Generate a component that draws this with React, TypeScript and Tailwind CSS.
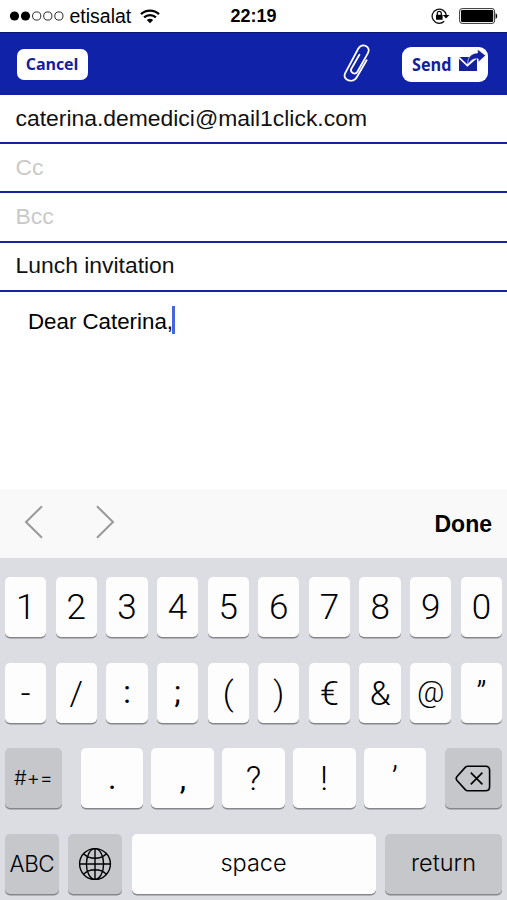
import type { ReactNode } from "react";

const SANS = "font-['Liberation_Sans',Arial,sans-serif]";

function StatusBar() {
  return (
    <div className="flex h-8 items-center bg-white text-black">
      <div className="flex flex-1 items-center pl-[9px]">
        <svg width="56" height="12" viewBox="0 0 56 12" className="shrink-0">
          <circle cx="5.5" cy="6" r="4.6" fill="#000" />
          <circle cx="16.5" cy="6" r="4.6" fill="#000" />
          <circle cx="27.7" cy="6" r="4.1" fill="none" stroke="#111" strokeWidth="0.9" />
          <circle cx="38.8" cy="6" r="4.1" fill="none" stroke="#111" strokeWidth="0.9" />
          <circle cx="49.9" cy="6" r="4.1" fill="none" stroke="#111" strokeWidth="0.9" />
        </svg>
        <span className="ml-[4.5px] text-[19.5px] leading-8">etisalat</span>
        <svg width="20" height="15" viewBox="0 0 20 15" className="ml-[9px]">
          <path d="M1 5.2C6 .4 14 .4 19 5.2" fill="none" stroke="#000" strokeWidth="2.3" />
          <path d="M4.1 8.4C7.3 5.3 12.7 5.3 15.9 8.4" fill="none" stroke="#000" strokeWidth="2.2" />
          <path d="M6.8 11.1C8.6 9.4 11.4 9.4 13.2 11.1L10 14.3Z" fill="#000" />
        </svg>
      </div>
      <span className="text-[18px] font-bold leading-8">22:19</span>
      <div className="flex flex-1 items-center justify-end pr-[9px]">
        <svg width="19" height="18" viewBox="0 0 19 18">
          <path d="M13.2 14.3A7.1 7.1 0 1 1 15.3 8.2" fill="none" stroke="#111" strokeWidth="1.3" />
          <path d="M11.8 7.9H18.4L15.1 11.5Z" fill="#000" />
          <rect x="5" y="7.8" width="6.6" height="5" rx=".6" fill="#000" />
          <path d="M6.3 8V6.4a2 2 0 0 1 4 0V8" fill="none" stroke="#000" strokeWidth="1.2" />
        </svg>
        <svg width="39" height="16" viewBox="0 0 39 16" className="ml-[9px]">
          <rect x=".6" y=".6" width="35" height="14.8" rx="2.5" fill="#fff" stroke="#333" strokeWidth="1" />
          <rect x="2" y="2" width="32.2" height="12" rx="1.2" fill="#000" />
          <path d="M36.6 5.2C38.8 5.8 38.8 10.2 36.6 10.8Z" fill="#000" />
        </svg>
      </div>
    </div>
  );
}

function Toolbar() {
  return (
    <div className="flex h-[63px] items-center border-t border-[#0a1680] bg-[#1022a8] pl-[17px] pr-[19px] font-['Open_Sans','Noto_Sans',sans-serif] font-bold text-[#12209c]">
      <button className="flex h-[31px] w-[71px] items-center justify-center rounded-[7px] bg-white pr-[1px] text-[16px] leading-none tracking-[-0.1px]">
        Cancel
      </button>
      <svg width="28" height="40" viewBox="0 0 28 40" className="ml-auto mr-[32px] -translate-y-[1px]" fill="none" stroke="#fff" strokeWidth="1.8" strokeLinecap="round">
        <path d="M24.6 17.2L14.6 34.5C11.4 40.5 -.2 37.4 3.2 30.2L16.2 5.8C20-.9 29.6 3.4 25.8 10.4L15.4 28.8C13 32.6 7.4 29.4 9.5 25.5L17.4 11.8" />
      </svg>
      <button className="flex h-[35px] w-[86px] items-center rounded-[9px] bg-white pl-[10px] text-[18px] leading-none">
        <span className="w-[40px] origin-left scale-x-[0.9]">Send</span>
        <svg width="28" height="25" viewBox="0 0 28 25" className="ml-[7px] shrink-0 -translate-y-[3px]">
          <path d="M0 8H18V22H0Z" fill="#12209c" />
          <path d="M0 8.5L8.4 16.5L17.5 8.5" fill="none" stroke="#fff" strokeWidth="1.7" />
          <path d="M8.8 15.6C8.2 8.6 12 4.2 18.6 3.9V.2L26.6 6.6L19.2 13.2V9.9C14.4 9.5 11.2 11.2 8.8 15.6Z" fill="#12209c" stroke="#fff" strokeWidth=".6" />
        </svg>
      </button>
    </div>
  );
}

function Field({ text, placeholder }: { text: string; placeholder?: boolean }) {
  return (
    <div
      className={`flex h-[49.2px] items-center border-b-2 border-[#1525a0] pb-[1px] pl-[15.5px] text-[22.9px] ${
        placeholder ? "text-[#c9c9cb]" : "text-[#111]"
      }`}
    >
      {text}
    </div>
  );
}

function Key({ children, className = "", dark = false }: { children: ReactNode; className?: string; dark?: boolean }) {
  return (
    <div
      className={`flex h-[60px] items-center justify-center rounded-[5px] text-black shadow-[0_1.5px_0_#85878b] ${
        dark ? "bg-[#c5c7cb]" : "bg-[#fdfdfe]"
      } ${className}`}
    >
      {children}
    </div>
  );
}

function Glyph({ c, className = "text-[34px]" }: { c: string; className?: string }) {
  return <span className={`font-['Roboto',sans-serif] font-light leading-none ${className}`}>{c}</span>;
}

const DIGITS = ["1", "2", "3", "4", "5", "6", "7", "8", "9", "0"];
const SYMBOLS = ["-", "/", ":", ";", "(", ")", "€", "&", "@", "”"];
const MARKS = [".", ",", "?", "!", "’"];

const SYMBOL_STYLE: Record<string, string> = {
  "@": "text-[30px] -translate-y-[1px]",
  ":": "text-[31px] font-normal",
  ";": "text-[31px] font-normal",
  ".": "text-[32px] font-normal",
  ",": "text-[32px] font-normal",
};

function Keyboard() {
  return (
    <div className="flex h-[342px] flex-col gap-[25.7px] bg-[#dbdde2] px-[5px] pt-[19px]">
      <div className="grid grid-cols-10 gap-[9.4px]">
        {DIGITS.map((c) => (
          <Key key={c}>
            <Glyph c={c} className="text-[35px]" />
          </Key>
        ))}
      </div>
      <div className="grid grid-cols-10 gap-[9.4px]">
        {SYMBOLS.map((c) => (
          <Key key={c}>
            <Glyph c={c} className={SYMBOL_STYLE[c]} />
          </Key>
        ))}
      </div>
      <div className="flex justify-between">
        <Key dark className="w-[57px]">
          <span className="font-['Inter',sans-serif] text-[20px] font-light">#+=</span>
        </Key>
        <div className="flex gap-2">
          {MARKS.map((c) => (
            <Key key={c} className="w-[62.7px]">
              <Glyph c={c} className={SYMBOL_STYLE[c]} />
            </Key>
          ))}
        </div>
        <Key dark className="w-[57px]">
          <svg width="36" height="27" viewBox="0 0 36 27" fill="none" stroke="#000" strokeWidth="1.6" className="translate-x-[-1px]">
            <path d="M12.6 1.2H30.5Q34.6 1.2 34.6 5.3V21.7Q34.6 25.8 30.5 25.8H12.6Q11.4 25.8 10.5 24.9L2 15.6Q.4 13.5 2 11.4L10.5 2.1Q11.4 1.2 12.6 1.2Z" />
            <path d="M15.8 7.6L27.4 19.4M27.4 7.6L15.8 19.4" />
          </svg>
        </Key>
      </div>
      <div className="flex">
        <Key dark className="w-[53.5px]">
          <span className="font-['Inter',sans-serif] text-[22.5px] font-light tracking-[-0.6px]">ABC</span>
        </Key>
        <Key dark className="ml-[9.5px] w-[53.5px]">
          <svg width="34" height="34" viewBox="0 0 34 34" fill="none" stroke="#000" strokeWidth="1.4">
            <circle cx="17" cy="17" r="15.4" />
            <ellipse cx="17" cy="17" rx="8.6" ry="15.4" />
            <path d="M17 1.6V32.4M1.6 17H32.4M5.6 6.8C11 12.8 23 12.8 28.4 6.8M5.6 27.2C11 21.2 23 21.2 28.4 27.2" />
          </svg>
        </Key>
        <Key className="ml-[10px] w-[244px]">
          <span className="-translate-y-[1px] font-['Inter',sans-serif] text-[23.5px] font-light">space</span>
        </Key>
        <Key dark className="ml-[9.5px] w-[117px]">
          <span className="-translate-y-[1px] font-['Inter',sans-serif] text-[23.5px] font-light">return</span>
        </Key>
      </div>
    </div>
  );
}

export default function App() {
  return (
    <div className={`flex h-[900px] w-[507px] flex-col overflow-hidden bg-white ${SANS}`}>
      <StatusBar />
      <Toolbar />
      <div className="flex flex-col">
        <Field text="caterina.demedici@mail1click.com" />
        <Field text="Cc" placeholder />
        <Field text="Bcc" placeholder />
        <Field text="Lunch invitation" />
      </div>
      <div className="flex flex-1 items-start pl-[28px] pt-[14.2px] text-[22.3px] leading-[32px] text-black">
        <span>Dear Caterina,</span>
        <span className="ml-[-1px] h-[28px] w-[3px] bg-[#4468dc]" />
      </div>
      <div className="flex h-[69px] items-center bg-[#f9f9f9] pl-[24px] pr-[15px]">
        <svg width="92" height="34" viewBox="0 0 92 34" fill="none" stroke="#999" strokeWidth="2" className="-translate-y-[2px]">
          <path d="M18 1.3L2 17L18 32.7M73 1.3L89 17L73 32.7" />
        </svg>
        <span className="ml-auto pt-[2px] text-[23px] font-bold text-black">Done</span>
      </div>
      <Keyboard />
    </div>
  );
}
